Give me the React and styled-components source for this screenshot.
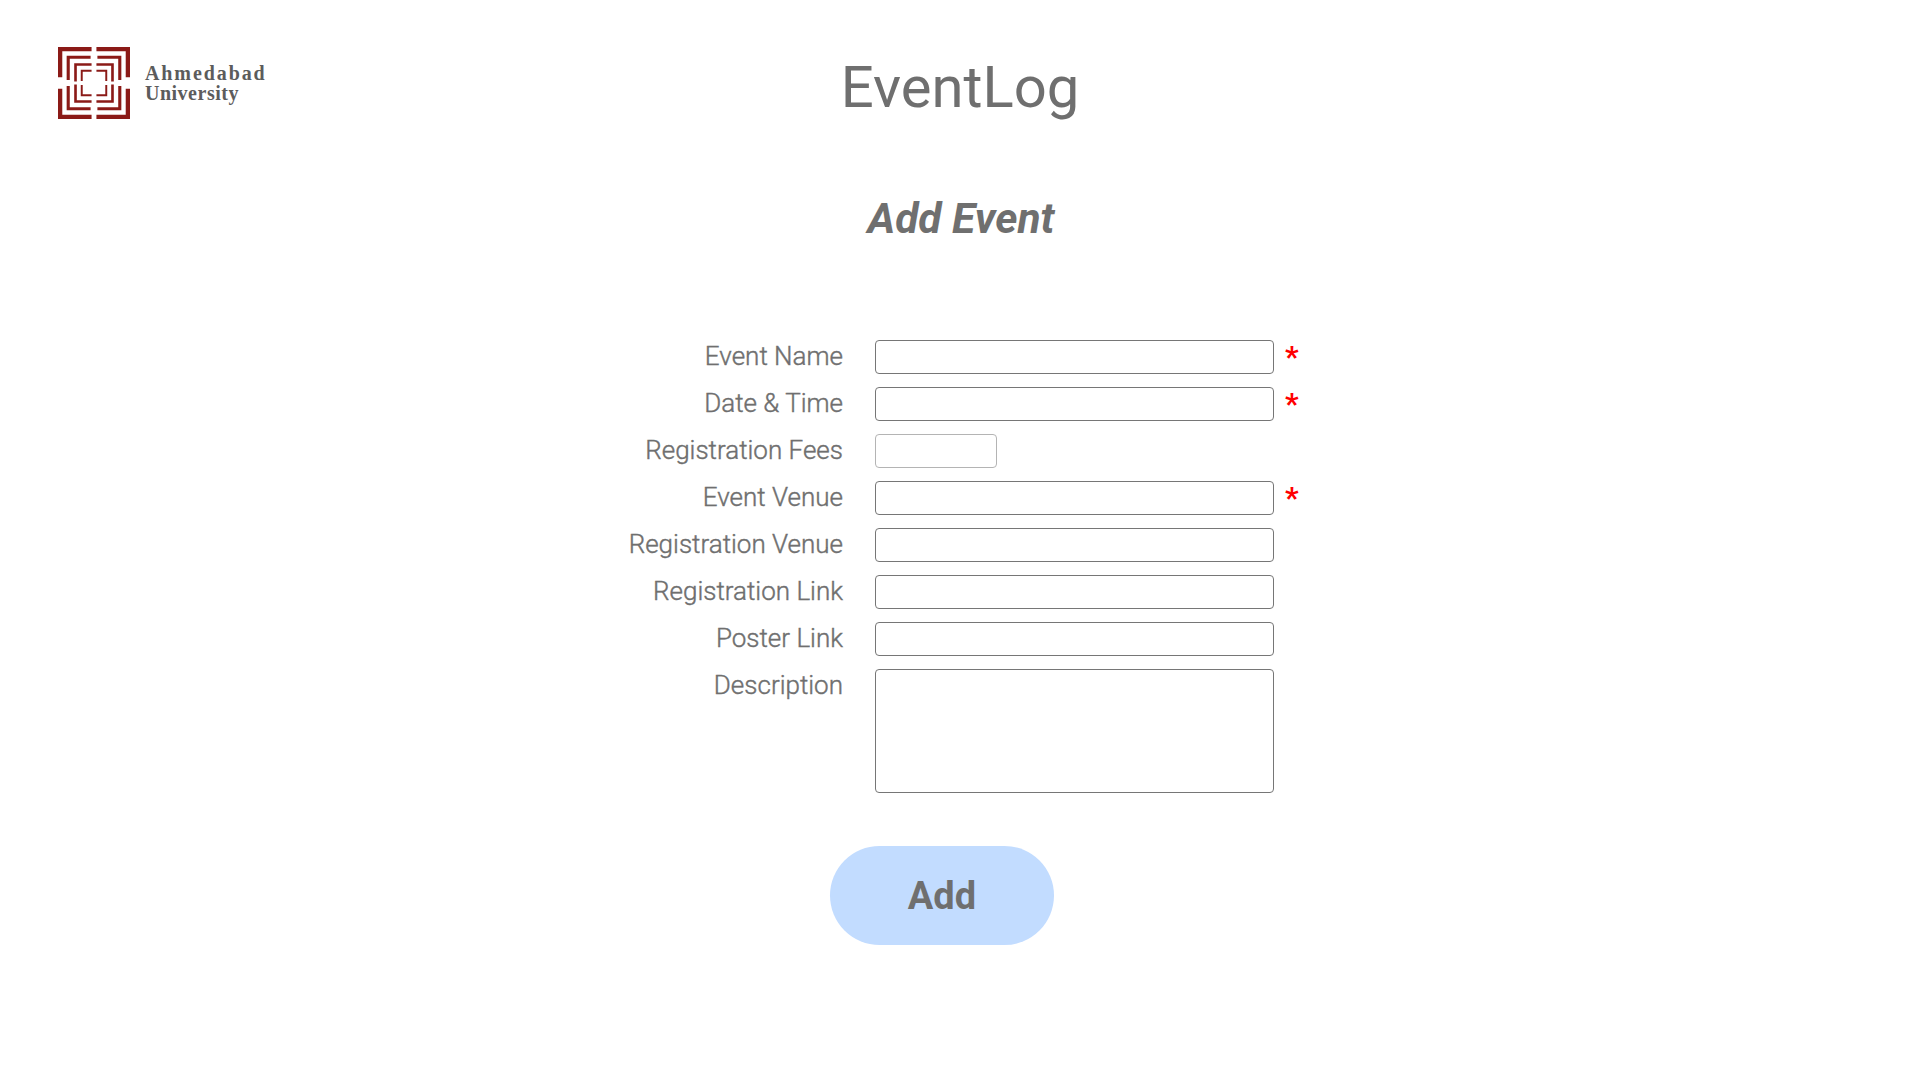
import React from "react";
import styled, { createGlobalStyle } from "styled-components";

const GlobalStyle = createGlobalStyle`
  html, body {
    margin: 0;
    padding: 0;
    background: #fff;
    font-family: Roboto, "Liberation Sans", sans-serif;
    color: #6f6f6f;
  }
`;

const Page = styled.div`
  width: 1920px;
  height: 1080px;
  position: relative;
  overflow: hidden;
`;

const Brand = styled.div`
  position: absolute;
  left: 58px;
  top: 47px;
  display: flex;
  align-items: center;
  gap: 15px;
`;

const BrandText = styled.div`
  font-family: "Liberation Serif", serif;
  font-weight: 700;
  font-size: 20px;
  line-height: 20px;
  color: #5c5c5c;
`;

const BrandLine = styled.div`
  letter-spacing: ${(props) => props.$spacing};
`;

const Header = styled.header`
  padding-top: 48px;
  text-align: center;
`;

const Title = styled.h1`
  margin: 0;
  font-size: 58px;
  line-height: 78px;
  font-weight: 400;
`;

const Subtitle = styled.h2`
  margin: 66px 0 0;
  padding-left: 2px;
  font-size: 42.5px;
  line-height: 54px;
  font-weight: 700;
  font-style: italic;
`;

const Form = styled.form`
  margin: 94px 0 0 600px;
  display: grid;
  grid-template-columns: 243px 399px auto;
  column-gap: 32px;
  row-gap: 13px;
  justify-content: start;
  align-items: start;
`;

const Label = styled.label`
  font-size: 26px;
  line-height: 33px;
  font-weight: 300;
  text-align: right;
  white-space: nowrap;
  -webkit-text-stroke: 0.4px #6f6f6f;
`;

const Field = styled.input`
  box-sizing: border-box;
  display: block;
  width: ${(props) => props.$width || "399px"};
  height: 34px;
  margin: 0;
  padding: 0 8px;
  background: #fff;
  border: 1px solid ${(props) => props.$light ? "#b4b4b4" : "#767676"};
  border-radius: 4px;
  outline: none;
`;

const TextArea = styled.textarea`
  box-sizing: border-box;
  display: block;
  width: 399px;
  height: 124px;
  margin: 0;
  padding: 8px;
  background: #fff;
  border: 1px solid #767676;
  border-radius: 4px;
  outline: none;
  resize: none;
`;

const Required = styled.span`
  margin-left: -21px;
  color: #f00;
  font-size: 30px;
  line-height: 34px;
  font-weight: 700;
`;

const ButtonRow = styled.div`
  margin: 53px 0 0 830px;
`;

const AddButton = styled.button`
  width: 224px;
  height: 99px;
  padding: 0;
  border: none;
  border-radius: 50px;
  background: #c2dcff;
  color: #6f6f6f;
  font-family: Roboto, "Liberation Sans", sans-serif;
  font-size: 38px;
  font-weight: 700;
`;

// concentric square brackets, split at the middle of each side
const brackets = [
  { o: 2.2, w: 4.4, endX: 34.5, endY: 31 },
  { o: 10.5, w: 3.2, endX: 33.5, endY: 34 },
  { o: 18, w: 2.7, endX: 34.5, endY: 35.5 },
  { o: 24.4, w: 2, endX: 34.5, endY: 35 },
];

function Logo() {
  const size = 74;
  return (
    <svg width="72" height="72" viewBox="0 0 74 74" fill="none" stroke="#8b1a17">
      {brackets.map(({ o, w, endX, endY }) => {
        const far = size - o;
        const rightX = size - endX;
        const lowerY = size - endY;
        return (
          <g key={o} strokeWidth={w}>
            <path d={`M${o} ${endY}V${o}H${endX}`} />
            <path d={`M${rightX} ${o}H${far}V${endY}`} />
            <path d={`M${far} ${lowerY}V${far}H${rightX}`} />
            <path d={`M${endX} ${far}H${o}V${lowerY}`} />
          </g>
        );
      })}
    </svg>
  );
}

const rows = [
  { label: "Event Name", required: true },
  { label: "Date & Time", required: true },
  { label: "Registration Fees", width: "122px", light: true },
  { label: "Event Venue", required: true },
  { label: "Registration Venue" },
  { label: "Registration Link" },
  { label: "Poster Link" },
];

export default function App() {
  return (
    <Page>
      <GlobalStyle />
      <Brand>
        <Logo />
        <BrandText>
          <BrandLine $spacing="1.9px">Ahmedabad</BrandLine>
          <BrandLine $spacing="0.5px">University</BrandLine>
        </BrandText>
      </Brand>
      <Header>
        <Title>EventLog</Title>
        <Subtitle>Add Event</Subtitle>
      </Header>
      <Form>
        {rows.map((row) => (
          <React.Fragment key={row.label}>
            <Label>{row.label}</Label>
            <Field $width={row.width} $light={row.light} />
            {row.required ? <Required>*</Required> : <span />}
          </React.Fragment>
        ))}
        <Label>Description</Label>
        <TextArea />
        <span />
      </Form>
      <ButtonRow>
        <AddButton type="button">Add</AddButton>
      </ButtonRow>
    </Page>
  );
}
